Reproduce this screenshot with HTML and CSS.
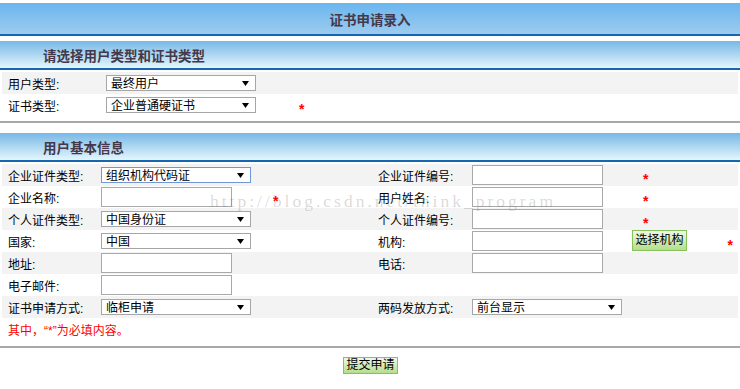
FILE: index.html
```html
<!DOCTYPE html>
<html lang="zh-CN">
<head>
<meta charset="utf-8">
<title>证书申请录入</title>
<link rel="stylesheet" href="styles.css">
</head>
<body>
<div class="page">
  <div class="title">证书申请录入</div>

  <div class="sec-head">请选择用户类型和证书类型</div>
  <div class="form form-a">
    <div class="row">
      <div class="lbl">用户类型:</div>
      <div><div class="sel"><span>最终用户</span><svg class="caret" viewBox="0 0 7 5" width="7" height="5"><path d="M0 0H7L3.5 5Z"/></svg></div></div>
      <div></div>
    </div>
    <div class="row">
      <div class="lbl">证书类型:</div>
      <div><div class="sel"><span>企业普通硬证书</span><svg class="caret" viewBox="0 0 7 5" width="7" height="5"><path d="M0 0H7L3.5 5Z"/></svg></div></div>
      <div class="req">*</div>
    </div>
  </div>
  <div class="rule"></div>

  <div class="sec-head sec-head-b">用户基本信息</div>
  <div class="form form-b">
    <div class="row">
      <div class="lbl">企业证件类型:</div>
      <div><div class="sel sel-focus"><span>组织机构代码证</span><svg class="caret" viewBox="0 0 7 5" width="7" height="5"><path d="M0 0H7L3.5 5Z"/></svg></div></div>
      <div></div>
      <div class="lbl lbl-r">企业证件编号:</div>
      <div><input class="txt" type="text"></div>
      <div class="req req-r">*</div>
    </div>
    <div class="row">
      <div class="lbl">企业名称:</div>
      <div><input class="txt" type="text"></div>
      <div class="req">*</div>
      <div class="lbl lbl-r">用户姓名:</div>
      <div><input class="txt" type="text"></div>
      <div class="req req-r">*</div>
    </div>
    <div class="row">
      <div class="lbl">个人证件类型:</div>
      <div><div class="sel"><span>中国身份证</span><svg class="caret" viewBox="0 0 7 5" width="7" height="5"><path d="M0 0H7L3.5 5Z"/></svg></div></div>
      <div></div>
      <div class="lbl lbl-r">个人证件编号:</div>
      <div><input class="txt" type="text"></div>
      <div class="req req-r">*</div>
    </div>
    <div class="row">
      <div class="lbl">国家:</div>
      <div><div class="sel"><span>中国</span><svg class="caret" viewBox="0 0 7 5" width="7" height="5"><path d="M0 0H7L3.5 5Z"/></svg></div></div>
      <div></div>
      <div class="lbl lbl-r">机构:</div>
      <div><input class="txt" type="text"></div>
      <div class="cell-btn"><button class="btn btn-org" type="button">选择机构</button><span class="req req-end">*</span></div>
    </div>
    <div class="row">
      <div class="lbl">地址:</div>
      <div><input class="txt" type="text"></div>
      <div></div>
      <div class="lbl lbl-r">电话:</div>
      <div><input class="txt" type="text"></div>
      <div></div>
    </div>
    <div class="row">
      <div class="lbl">电子邮件:</div>
      <div><input class="txt" type="text"></div>
      <div></div>
      <div></div>
      <div></div>
      <div></div>
    </div>
    <div class="row">
      <div class="lbl">证书申请方式:</div>
      <div><div class="sel"><span>临柜申请</span><svg class="caret" viewBox="0 0 7 5" width="7" height="5"><path d="M0 0H7L3.5 5Z"/></svg></div></div>
      <div></div>
      <div class="lbl lbl-r">两码发放方式:</div>
      <div><div class="sel"><span>前台显示</span><svg class="caret" viewBox="0 0 7 5" width="7" height="5"><path d="M0 0H7L3.5 5Z"/></svg></div></div>
      <div></div>
    </div>
    <div class="row">
      <div class="note">其中，“*”为必填内容。</div>
    </div>
  </div>
  <div class="rule rule-b"></div>

  <div class="submit-row"><button class="btn btn-submit" type="button">提交申请</button></div>

  <div class="watermark">http://blog.csdn.net/think_program</div>
</div>
</body>
</html>
```
FILE: styles.css
```css
* { box-sizing: border-box; }
html, body { margin: 0; padding: 0; background: #fff; }
body {
  font-family: "Liberation Sans", "Noto Sans CJK SC", sans-serif;
  font-size: 12px;
  color: #000;
  width: 740px;
  height: 389px;
  overflow: hidden;
}
.page {
  position: relative;
  padding-top: 3px;
}
.title {
  height: 33px;
  border-bottom: 2px solid #1766b0;
  background: linear-gradient(to bottom, #6ab6ee, #9dcbef);
  display: flex;
  align-items: center;
  justify-content: center;
  font-size: 13.5px;
  font-weight: bold;
  color: #45384a;
  margin-bottom: 5px;
}
.sec-head {
  height: 29px;
  border-bottom: 2px solid #1766b0;
  background: linear-gradient(to bottom, #76b8e6, #e4f6fd);
  display: flex;
  align-items: center;
  padding-left: 43px;
  font-size: 13.5px;
  font-weight: bold;
  color: #45384a;
  margin-bottom: 2px;
}
.sec-head-b { margin-top: 10px; }
.form { display: flex; flex-direction: column; }
.row {
  display: grid;
  height: 22px;
  align-items: center;
  margin: 0 2px;
}
.row:nth-child(odd) { background: #f3f3f3; }
.form-a .row { grid-template-columns: 104px 190px 1fr; }
.form-b .row { grid-template-columns: 99px 169px 106px 96px 152px 1fr; }
.lbl { padding-left: 6px; padding-top: 1px; white-space: nowrap; }
.lbl-r { padding-left: 2px; }
.sel {
  width: 150px;
  height: 16px;
  border: 1px solid #a6a6a6;
  background: #fff;
  display: flex;
  align-items: center;
  justify-content: space-between;
  padding: 2px 6px 0 4px;
  overflow: hidden;
  line-height: 14px;
  font-size: 12px;
}
.sel-focus { border-color: #7297d6; }
.caret { fill: #000; flex: none; margin-top: -2px; }
.txt {
  display: block;
  width: 131px;
  height: 20px;
  border: 1px solid #a9a9a9;
  background: #fff;
  margin: 0;
  padding: 0 2px;
  font: inherit;
  outline: none;
}
.req {
  color: #f00;
  font-weight: bold;
  font-size: 14px;
  padding-left: 3px;
  padding-top: 7px;
  line-height: 14px;
}
.req-r { padding-left: 19px; }
.cell-btn { display: flex; align-items: center; padding-left: 8px; padding-right: 5px; }
.req-end { margin-left: auto; padding-left: 0; }
.btn {
  font-family: "Liberation Sans", "Noto Sans CJK SC", sans-serif;
  font-size: 12px;
  color: #000;
  border: 1px solid #86c25c;
  background: linear-gradient(to bottom, #f0f9e8, #b3de8a);
  padding: 0;
  margin: 0;
  line-height: 14px;
}
.btn-org { width: 55px; height: 21px; margin-top: -2px; }
.note {
  grid-column: 1 / -1;
  padding-left: 6px;
  color: #f00;
  padding-top: 1px;
}
.rule {
  height: 2px;
  background: #a8a8a8;
  margin-top: 5px;
}
.rule-b { margin-top: 6px; }
.submit-row {
  display: flex;
  justify-content: center;
  padding-top: 9px;
  padding-left: 1px;
}
.btn-submit { width: 55px; height: 17px; line-height: 15px; }
.watermark {
  position: absolute;
  left: 210px;
  top: 191px;
  font-family: "Liberation Serif", serif;
  font-size: 17.5px;
  letter-spacing: 3px;
  line-height: 20px;
  color: rgba(110, 110, 110, 0.26);
  white-space: nowrap;
  pointer-events: none;
}
```
